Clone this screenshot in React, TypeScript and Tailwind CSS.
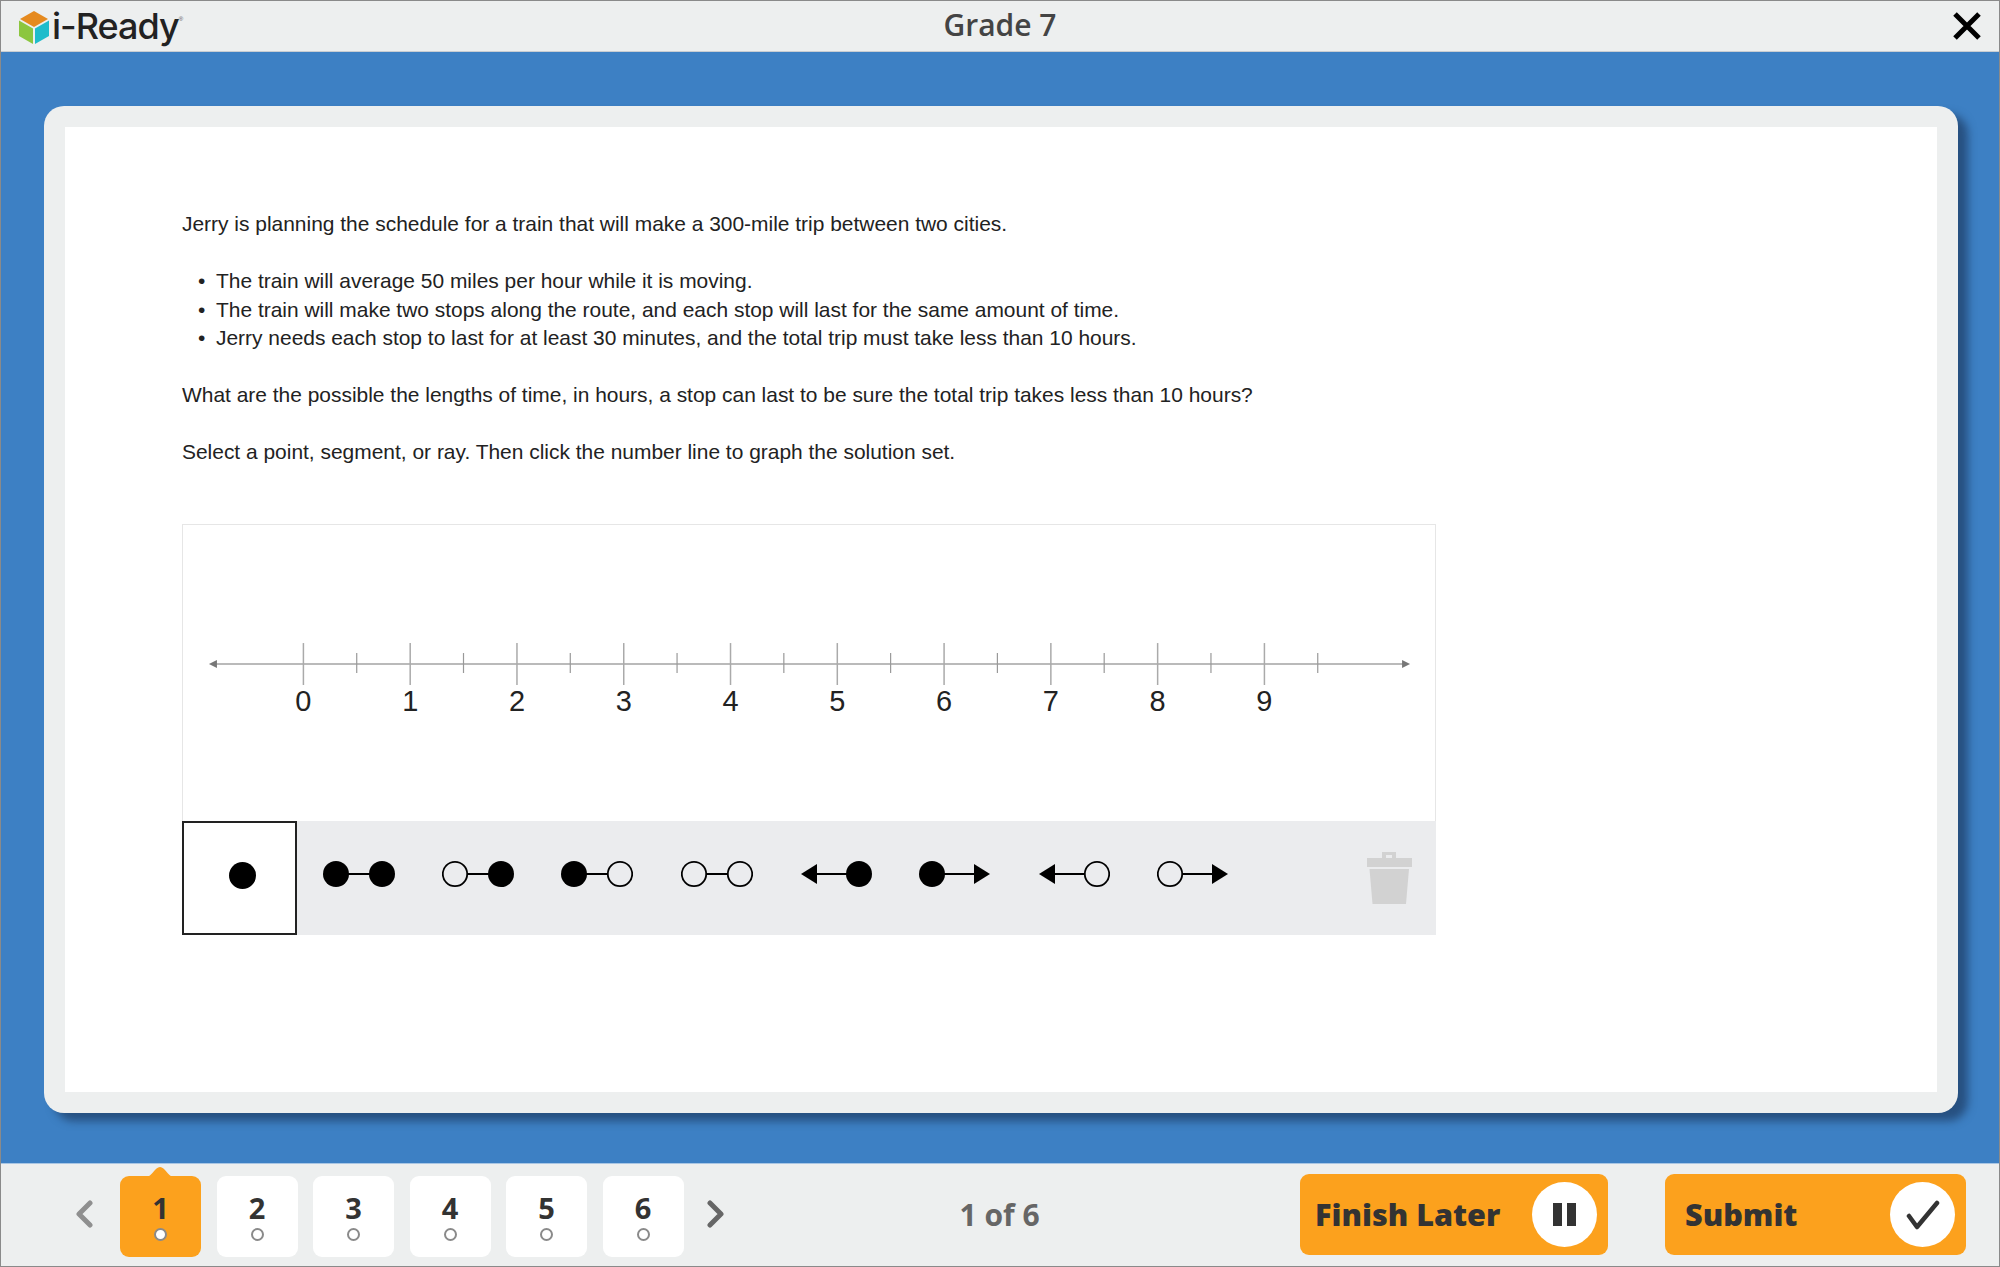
const bullets = [
  'The train will average 50 miles per hour while it is moving.',
  'The train will make two stops along the route, and each stop will last for the same amount of time.',
  'Jerry needs each stop to last for at least 30 minutes, and the total trip must take less than 10 hours.',
];

const majorTicks = [0, 1, 2, 3, 4, 5, 6, 7, 8, 9];

const tools = [
  { left: 'filled', right: 'filled' },
  { left: 'open', right: 'filled' },
  { left: 'filled', right: 'open' },
  { left: 'open', right: 'open' },
  { left: 'arrow', right: 'filled' },
  { left: 'filled', right: 'arrow' },
  { left: 'arrow', right: 'open' },
  { left: 'open', right: 'arrow' },
];

const Logo = () => (
  <div className="flex items-start">
    <svg width="30" height="33" viewBox="0 0 30 33" className="mt-[10px] ml-[18px]">
      <path d="M15 0 29 8 15 16 1 8Z" fill="#e58a1f" />
      <path d="M0 9.5 14 17.5V33L0 25Z" fill="#8cc63f" />
      <path d="M30 9.5 16 17.5V33L30 25Z" fill="#1fbccb" />
    </svg>
    <span className="ml-[3px] mt-[4px] text-[36px] leading-[42px] font-medium tracking-[-1px] text-[#222] font-['Inter',sans-serif]">
      i-Ready
    </span>
    <span className="mt-[14px] text-[6px] leading-[8px] text-[#555] font-['Liberation_Sans',sans-serif]">®</span>
  </div>
);

const NumberLine = () => (
  <svg viewBox="182 524 1254 296" className="block w-full h-[296px]">
    <line x1="215" y1="663" x2="1404" y2="663" stroke="#a3a3a3" strokeWidth="1.5" />
    <path d="M208 663 216 659V667Z" fill="#777" />
    <path d="M1411 663 1403 659V667Z" fill="#777" />
    {majorTicks.map(n => {
      const x = 302.6 + n * 106.95;
      return (
        <g key={n}>
          <line x1={x} y1="642" x2={x} y2="684" stroke="#aaa" strokeWidth="1.5" />
          <line x1={x + 53.4} y1="652" x2={x + 53.4} y2="672" stroke="#999" strokeWidth="1.2" />
          <text
            x={x}
            y="710.5"
            textAnchor="middle"
            fontSize="29"
            fill="#222"
            fontFamily="'Liberation Sans', sans-serif"
          >
            {n}
          </text>
        </g>
      );
    })}
  </svg>
);

const End = ({ kind, side }: { kind: string; side: 'left' | 'right' }) => {
  if (kind === 'arrow') {
    return side === 'left' ? (
      <path d="M1 14 17 4V24Z" fill="#000" />
    ) : (
      <path d="M71 14 55 4V24Z" fill="#000" />
    );
  }
  const cx = side === 'left' ? 13 : 59;
  if (kind === 'filled') return <circle cx={cx} cy="14" r="13" fill="#000" />;
  return <circle cx={cx} cy="14" r="12.2" fill="none" stroke="#000" strokeWidth="1.8" />;
};

const ToolIcon = ({ left, right }: { left: string; right: string }) => (
  <svg width="72" height="28" viewBox="0 0 72 28" className="shrink-0">
    <line x1={left === 'open' ? 26 : 14} y1="14" x2={right === 'open' ? 46 : 58} y2="14" stroke="#000" strokeWidth="2" />
    <End kind={left} side="left" />
    <End kind={right} side="right" />
  </svg>
);

const Trash = () => (
  <svg width="45" height="53" viewBox="0 0 45 53" className="mr-[24px] shrink-0">
    <path d="M15 7V1H29V7H25V4H19V7Z" fill="#d2d2d2" />
    <path d="M0 7H45V16H0Z" fill="#d2d2d2" />
    <path d="M2.5 18H42L39 53H5.5Z" fill="#d2d2d2" />
  </svg>
);

const PageTile = ({ n, active }: { n: number; active?: boolean }) => (
  <div
    className={`relative w-[81px] h-[81px] rounded-[9px] flex flex-col items-center pt-[18px] ${
      active ? 'bg-[#fca11d]' : 'bg-white'
    }`}
  >
    {active && (
      <svg width="26" height="10" viewBox="0 0 26 10" className="absolute top-[-9px] left-[27px]">
        <path d="M0 10C5 9 8 0 13 0S21 9 26 10Z" fill="#fca11d" />
      </svg>
    )}
    <span className="text-[29px] leading-[28px] font-bold text-[#333] font-['Open_Sans',sans-serif]">{n}</span>
    <span className="mt-[6px] w-[13px] h-[13px] rounded-full bg-white border-2 border-[#8a8a8a]" />
  </div>
);

const Chevron = ({ dir, color }: { dir: 'left' | 'right'; color: string }) => (
  <svg width="18" height="28" viewBox="0 0 18 28" className="shrink-0 mb-[6px]">
    <path
      d={dir === 'left' ? 'M15 3 4 14 15 25' : 'M3 3 14 14 3 25'}
      fill="none"
      stroke={color}
      strokeWidth="5"
      strokeLinecap="round"
      strokeLinejoin="round"
    />
  </svg>
);

export default function App() {
  return (
    <div className="w-full h-[1267px] flex flex-col border border-[#8a8a8a] bg-[#3d80c4] overflow-hidden">
      <header className="relative h-[51px] shrink-0 bg-[#edefef] border-b border-[#c8cdd2]">
        <Logo />
        <h1 className="absolute top-[6px] left-0 w-full text-center text-[30px] leading-[36px] font-semibold text-[#444] font-['Open_Sans',sans-serif]">
          Grade 7
        </h1>
        <svg width="28" height="28" viewBox="0 0 28 28" className="absolute top-[11px] right-[18px]">
          <path d="M2 2 26 26M26 2 2 26" stroke="#000" strokeWidth="5" />
        </svg>
      </header>

      <main className="flex-1 pt-[54px] pb-[50px] pl-[43px] pr-[41px]">
        <div className="h-full rounded-[20px] bg-[#edefef] p-[21px] shadow-[10px_8px_8px_rgba(30,60,100,0.7)]">
          <div className="h-full bg-white pt-[83px] pl-[117px] text-[20.95px] leading-[28.5px] text-[#222] font-['Liberation_Sans',sans-serif]">
            <p>Jerry is planning the schedule for a train that will make a 300-mile trip between two cities.</p>
            <ul className="mt-[28.5px]">
              {bullets.map(b => (
                <li key={b} className="flex">
                  <span className="w-[34px] pl-[16px]">•</span>
                  {b}
                </li>
              ))}
            </ul>
            <p className="mt-[28.5px]">
              What are the possible the lengths of time, in hours, a stop can last to be sure the total trip takes less than 10 hours?
            </p>
            <p className="mt-[28.5px]">Select a point, segment, or ray. Then click the number line to graph the solution set.</p>

            <div className="mt-[57px] w-[1254px]">
              <div className="border border-b-0 border-[#e6e6e6]">
                <NumberLine />
              </div>
              <div className="h-[114px] flex items-center bg-[#ebecee]">
                <div className="w-[115px] h-[114px] shrink-0 flex items-center justify-center pl-[6px] pb-[4px] bg-white border-2 border-[#222]">
                  <span className="w-[27px] h-[27px] rounded-full bg-black" />
                </div>
                <div className="flex items-center gap-[47.2px] ml-[26px] pb-[8px]">
                  {tools.map(t => (
                    <ToolIcon key={t.left + t.right} left={t.left} right={t.right} />
                  ))}
                </div>
                <div className="ml-auto">
                  <Trash />
                </div>
              </div>
            </div>
          </div>
        </div>
      </main>

      <footer className="h-[103px] shrink-0 flex items-start pt-[10px] bg-[#edefef] border-t border-[#a9c6e4] font-['Open_Sans',sans-serif]">
        <div className="flex items-center mt-[2px] pl-[74px]">
          <Chevron dir="left" color="#8f8f8f" />
          <div className="flex gap-[15.5px] ml-[27px] mr-[23px]">
            {[1, 2, 3, 4, 5, 6].map(n => (
              <PageTile key={n} n={n} active={n === 1} />
            ))}
          </div>
          <Chevron dir="right" color="#666" />
        </div>
        <span className="ml-[235px] mt-[23px] text-[30px] leading-[36px] font-bold text-[#666]">1 of 6</span>
        <div className="flex gap-[57px] ml-auto mr-[33px]">
          <button className="w-[308px] h-[81px] rounded-[9px] bg-[#fca11d] flex items-center pl-[15px] pr-[11px]">
            <span className="text-[30.6px] font-extrabold text-[#333]">Finish Later</span>
            <span className="ml-auto w-[65px] h-[65px] rounded-full bg-white flex items-center justify-center gap-[5px]">
              <span className="w-[9px] h-[23px] bg-[#333]" />
              <span className="w-[9px] h-[23px] bg-[#333]" />
            </span>
          </button>
          <button className="w-[301px] h-[81px] rounded-[9px] bg-[#fca11d] flex items-center pl-[20px] pr-[11px]">
            <span className="text-[30.6px] font-extrabold text-[#333]">Submit</span>
            <span className="ml-auto w-[65px] h-[65px] rounded-full bg-white flex items-center justify-center">
              <svg width="34" height="30" viewBox="0 0 34 30">
                <path d="M3 16 11 27 31 3" fill="none" stroke="#333" strokeWidth="4.5" strokeLinecap="round" strokeLinejoin="round" />
              </svg>
            </span>
          </button>
        </div>
      </footer>
    </div>
  );
}
